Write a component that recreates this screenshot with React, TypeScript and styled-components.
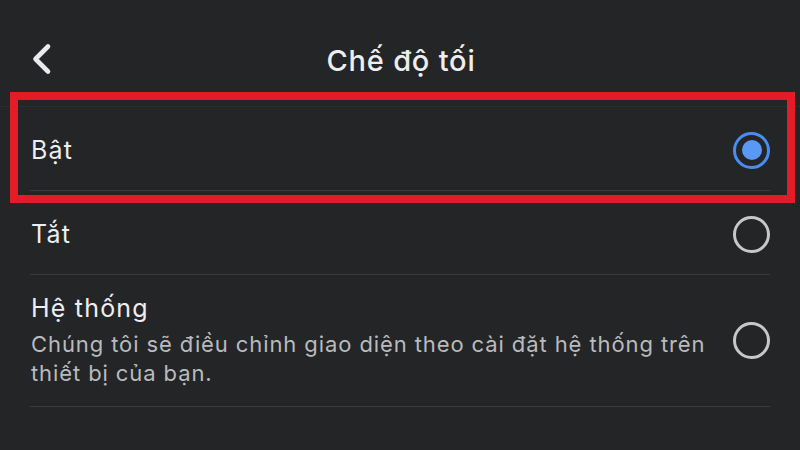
import React, {useState} from "react";
import styled, {createGlobalStyle} from "styled-components";

const GlobalStyle = createGlobalStyle`
  html, body {
    margin: 0;
    padding: 0;
    background: #242526;
  }
  body {
    font-family: Inter, "Noto Sans", "DejaVu Sans", sans-serif;
    -webkit-font-smoothing: antialiased;
  }
`;

const Screen = styled.div`
  width: 800px;
  height: 450px;
  overflow: hidden;
  background: #242526;
  color: #e4e6eb;
`;

const Header = styled.header`
  display: grid;
  grid-template-columns: 1fr auto 1fr;
  align-items: center;
  height: 107px;
  padding-top: 14px;
  border-bottom: 1px solid #2c2d2f;
  box-sizing: border-box;
`;

const BackButton = styled.button`
  display: flex;
  align-items: center;
  justify-content: flex-start;
  width: 24px;
  height: 34px;
  padding: 0;
  margin: -2px 0 0 31px;
  border: none;
  background: none;
  color: #e9eaee;
  cursor: pointer;
`;

const Title = styled.h1`
  margin: 0 0 0 2px;
  font-size: 29px;
  font-weight: 500;
  letter-spacing: 0.8px;
  color: #eceef1;
`;

const List = styled.ul`
  list-style: none;
  margin: 0 30px;
  padding: 0;
`;

const Row = styled.li<{ tall?: boolean }>`
  position: relative;
  display: flex;
  align-items: center;
  justify-content: space-between;
  gap: 24px;
  box-sizing: border-box;
  height: ${props => (props.tall ? "132px" : "84px")};
  padding: ${props => (props.tall ? "17px 0 17px 1px" : "3px 0 0 1px")};
  border-bottom: 1px solid #3b3c3f;
  cursor: pointer;
`;

const Highlight = styled.div`
  position: absolute;
  top: -15px;
  left: -20px;
  right: -25px;
  bottom: -13px;
  border: 8px solid #e31d28;
  pointer-events: none;
`;

const TextBlock = styled.div`
  display: flex;
  flex-direction: column;
  max-width: 695px;
`;

const Label = styled.span`
  font-size: 25px;
  line-height: 30px;
  font-weight: 400;
  letter-spacing: 1.2px;
  color: #eceef1;
`;

const Description = styled.span`
  margin-top: 7px;
  font-size: 22px;
  line-height: 29px;
  letter-spacing: 0.9px;
  color: #b9bbbe;
`;

const Radio = styled.span<{ checked: boolean }>`
  position: relative;
  flex: none;
  width: 37px;
  height: 37px;
  box-sizing: border-box;
  border-radius: 50%;
  border: 3px solid ${props => (props.checked ? "#4a8cf3" : "#c6c7c9")};

  ${props => props.checked && `
    &::after {
      content: "";
      position: absolute;
      top: 5.5px;
      left: 5.5px;
      width: 20px;
      height: 20px;
      border-radius: 50%;
      background: #5a98f5;
    }
  `}
`;

const ChevronLeft = () => (
  <svg width="22" height="32" viewBox="0 0 22 32" fill="none">
    <polyline
      points="17,3.5 4.5,16 17,28.5"
      stroke="currentColor"
      strokeWidth="4.6"
      strokeLinecap="round"
      strokeLinejoin="round"
    />
  </svg>
);

type Option = {
  id: string;
  label: string;
  description?: string;
};

const options: Option[] = [
  {id: "on", label: "Bật"},
  {id: "off", label: "Tắt"},
  {
    id: "system",
    label: "Hệ thống",
    description: "Chúng tôi sẽ điều chỉnh giao diện theo cài đặt hệ thống trên thiết bị của bạn.",
  },
];

const App: React.FC = () => {
  const [selected, setSelected] = useState("on");

  return (
    <>
      <GlobalStyle/>
      <Screen>
        <Header>
          <BackButton aria-label="Quay lại">
            <ChevronLeft/>
          </BackButton>
          <Title>Chế độ tối</Title>
          <span/>
        </Header>
        <List>
          {options.map(option => (
            <Row key={option.id} tall={!!option.description} onClick={() => setSelected(option.id)}>
              <TextBlock>
                <Label>{option.label}</Label>
                {option.description && <Description>{option.description}</Description>}
              </TextBlock>
              <Radio checked={selected === option.id}/>
              {option.id === "on" && <Highlight/>}
            </Row>
          ))}
        </List>
      </Screen>
    </>
  );
};

export default App;
